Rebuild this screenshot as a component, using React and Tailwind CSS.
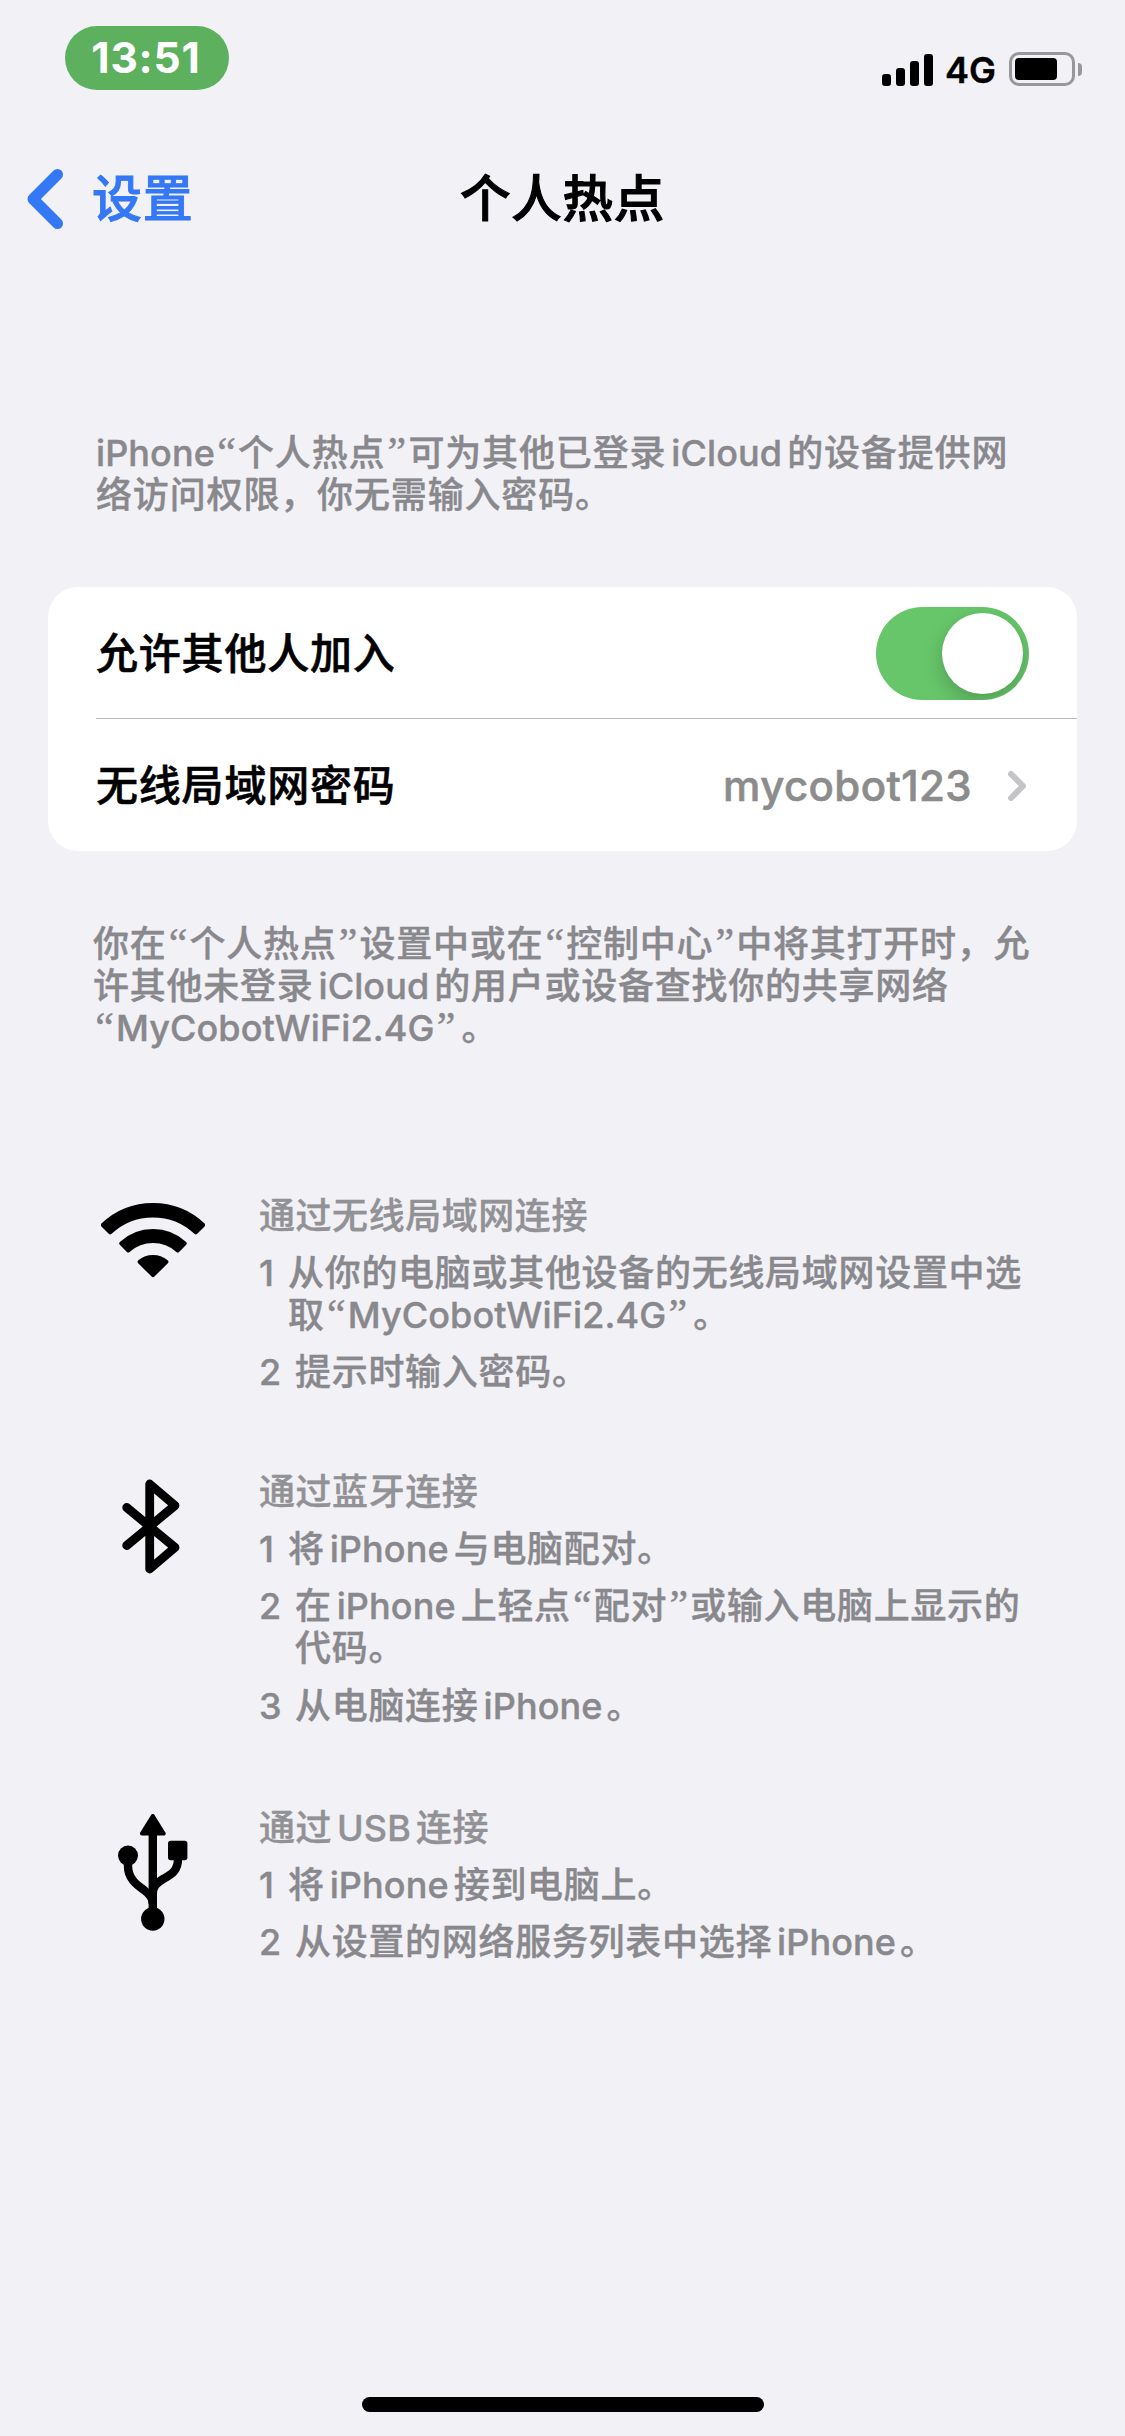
const TOKENS = /([A-Za-z0-9.]+|[“”])/;

// Sets mixed Chinese and Latin text, with a thin gap where the two scripts meet
// and curly quotes narrower than a full-width cell.
function Mixed({ text }) {
  const parts = text.split(TOKENS).filter(Boolean);
  return parts.map((part, i) => {
    const before = parts[i - 1] || "";
    const after = parts[i + 1] || "";
    if (part === "“" || part === "”") {
      return (
        <span
          key={i}
          className="inline-block w-[23px] text-center font-['Liberation_Serif',serif] text-[42px] leading-[20px] tracking-[0px]"
        >
          {part}
        </span>
      );
    }
    if (/^[A-Za-z0-9.]+$/.test(part)) {
      const left = before && before !== "“" ? "ml-[5px]" : "";
      const right = after && !/^[“”。]/.test(after) ? "mr-[5px]" : "";
      return (
        <span key={i} className={`tracking-[0.1px] ${left} ${right}`}>
          {part}
        </span>
      );
    }
    return (
      <span key={i} className={part === "。" ? "ml-[4px]" : ""}>
        {part}
      </span>
    );
  });
}

function Lines({ lines, className = "" }) {
  return (
    <div className={className}>
      {lines.map((line) => (
        <div key={line} className="h-[42px] whitespace-nowrap">
          <Mixed text={line} />
        </div>
      ))}
    </div>
  );
}

function WifiIcon() {
  return (
    <svg width="104" height="77" viewBox="0 0 104 77" stroke="black" strokeWidth="4" strokeLinejoin="round">
      <path d="M1.8 23A73 73 0 0 1 102.2 23L94.8 30.4A62.5 62.5 0 0 0 9.2 30.4Z" />
      <path d="M20.2 41.4A47 47 0 0 1 83.8 41.4L76.7 48.5A37 37 0 0 0 27.3 48.5Z" />
      <path d="M38.6 59.8A21 21 0 0 1 65.4 59.8L52 73.2Z" />
    </svg>
  );
}

function BluetoothIcon() {
  return (
    <svg width="58" height="95" viewBox="0 0 58 95" fill="none" stroke="black" strokeWidth="8.8" strokeLinecap="round" strokeLinejoin="round">
      <path d="M4.7 28.5L53 68.5L27.7 90V5L53 26.5L4.7 66.5" />
    </svg>
  );
}

function UsbIcon() {
  return (
    <svg width="70" height="117" viewBox="0 0 70 117">
      <path d="M34.8 2L45.7 19.5H23.9Z" stroke="black" strokeWidth="4" strokeLinejoin="round" />
      <g fill="none" stroke="black" strokeWidth="8.4">
        <path d="M34.8 18V98" />
        <path d="M10 46V52C10 65 19 71 26 76C32 80.5 34.8 84 34.8 90" />
        <path d="M60 42V45C60 57 53 60.5 46 64.5C38 69 34.8 73 34.8 80" />
      </g>
      <circle cx="10" cy="41.6" r="10" />
      <rect x="50" y="26.7" width="19.4" height="19.6" rx="2.8" />
      <circle cx="34.8" cy="105" r="11.7" />
    </svg>
  );
}

const GUIDES = [
  {
    title: "通过无线局域网连接",
    Icon: WifiIcon,
    iconClass: "pl-[5px] pt-[7px]",
    className: "h-[276px]",
    steps: [["从你的电脑或其他设备的无线局域网设置中选", "取“MyCobotWiFi2.4G”。"], ["提示时输入密码。"]],
  },
  {
    title: "通过蓝牙连接",
    Icon: BluetoothIcon,
    iconClass: "pl-[26px] pt-[8px]",
    className: "h-[336px]",
    steps: [["将iPhone与电脑配对。"], ["在iPhone上轻点“配对”或输入电脑上显示的", "代码。"], ["从电脑连接iPhone。"]],
  },
  {
    title: "通过USB连接",
    Icon: UsbIcon,
    iconClass: "pl-[22px] pt-[7px]",
    className: "h-[336px]",
    steps: [["将iPhone接到电脑上。"], ["从设置的网络服务列表中选择iPhone。"]],
  },
];

function Guide({ title, Icon, iconClass, className, steps }) {
  return (
    <section className={`flex ${className}`}>
      <div className={`w-[163px] shrink-0 ${iconClass}`}>
        <Icon />
      </div>
      <div>
        <h2 className="h-[42px] whitespace-nowrap tracking-[0.55px] text-[#929196]">
          <Mixed text={title} />
        </h2>
        <ol className="mt-[15px] flex flex-col gap-[15px] tracking-[0.7px]">
          {steps.map((lines, i) => (
            <li key={i} className={i === 2 ? "mt-px flex" : "flex"}>
              <span className={i === 0 ? "w-[29px]" : "w-[36px]"}>{i + 1}</span>
              <Lines lines={lines} />
            </li>
          ))}
        </ol>
      </div>
    </section>
  );
}

function StatusBar() {
  return (
    <div className="flex h-[116px] items-start justify-between pr-[43px] pl-[65px]">
      <div className="mt-[26px] flex h-16 w-[164px] items-center justify-center rounded-full bg-[#5cb05e] pr-[2px] text-[42.5px] leading-none font-bold tracking-[0.8px] text-white [-webkit-text-stroke:0px]">
        13:51
      </div>
      <div className="mt-[52px] flex h-[34px] items-center">
        <div className="flex h-[33px] items-end gap-[5px]">
          <div className="h-[12px] w-[9px] rounded-[3px] bg-black" />
          <div className="h-[18px] w-[9px] rounded-[3px] bg-black" />
          <div className="h-[25px] w-[9px] rounded-[3px] bg-black" />
          <div className="h-[32px] w-[9px] rounded-[3px] bg-black" />
        </div>
        <span className="mt-[2px] ml-[12px] w-[64px] text-[36px] leading-none font-semibold tracking-[0px] text-black">4G</span>
        <div className="h-[34px] w-[66px] rounded-[10px] border-[3px] border-[#98979c] p-[3px]">
          <div className="h-[22px] w-[42px] rounded-[4px] bg-black" />
        </div>
        <div className="ml-[3px] h-[13px] w-[4px] rounded-r-full bg-[#98979c]" />
      </div>
    </div>
  );
}

export default function App() {
  return (
    <main className="flex h-[2436px] w-[1125px] flex-col overflow-hidden bg-[#f1f1f6] font-['Inter','Noto_Sans_CJK_SC',sans-serif] text-[36px] leading-[42px] font-medium tracking-[0.75px] text-[#89888d] [-webkit-text-stroke:0.4px]">
      <StatusBar />

      <header className="grid h-[165px] grid-cols-3 text-[50px] tracking-[0.8px] text-[#3478f6] [-webkit-text-stroke:0.9px]">
        <div className="flex h-[165px] items-center gap-[28px] pl-[27px]">
          <svg width="37" height="60" viewBox="0 0 37 60" fill="none" stroke="currentColor" strokeWidth="11" strokeLinecap="round" strokeLinejoin="round">
            <path d="M30.5 5.5L6 30L30.5 54.5" />
          </svg>
          <span>设置</span>
        </div>
        <h1 className="flex items-center justify-center text-[50.5px] whitespace-nowrap text-black [-webkit-text-stroke:1.1px]">个人热点</h1>
      </header>

      <Lines className="mt-[151px] ml-[96px] tracking-[0.85px]" lines={["iPhone“个人热点”可为其他已登录iCloud的设备提供网", "络访问权限，你无需输入密码。"]} />

      <div className="mt-[71px] ml-[48px] h-[264px] w-[1029px] rounded-[30px] bg-white text-[42px] tracking-[0.8px] text-black [-webkit-text-stroke:0.6px]">
        <div className="flex h-[131px] items-center justify-between pr-[48px] pl-[48px]">
          <span className="pt-[3px]">允许其他人加入</span>
          <div className="mt-[1px] flex h-[93px] w-[153px] items-center justify-end overflow-hidden rounded-full bg-[#67c66a] pr-[6px]">
            <div className="size-[81px] rounded-full bg-white shadow-[0_8px_20px_rgba(0,0,0,0.2)]" />
          </div>
        </div>
        <div className="ml-[48px] flex h-[133px] items-center justify-between border-t border-[#bcbcbe] pt-[2px] pr-[50px]">
          <span>无线局域网密码</span>
          <div className="flex items-center gap-[35px] text-[#8c8c8c]">
            <span className="tracking-[0.4px]">mycobot123</span>
            <svg width="20" height="32" viewBox="0 0 20 32" fill="none" stroke="#c4c4c6" strokeWidth="6" strokeLinecap="round" strokeLinejoin="round">
              <path d="M4 4L16 16L4 28" />
            </svg>
          </div>
        </div>
      </div>

      <Lines className="mt-[72px] ml-[93px]" lines={["你在“个人热点”设置中或在“控制中心”中将其打开时，允", "许其他未登录iCloud的用户或设备查找你的共享网络", "“MyCobotWiFi2.4G”。"]} />

      <div className="mt-[146px] ml-[96px]">
        {GUIDES.map((guide) => (
          <Guide key={guide.title} {...guide} />
        ))}
      </div>

      <div className="mt-auto mb-[24px] h-[15px] w-[402px] shrink-0 self-center rounded-full bg-black" />
    </main>
  );
}
